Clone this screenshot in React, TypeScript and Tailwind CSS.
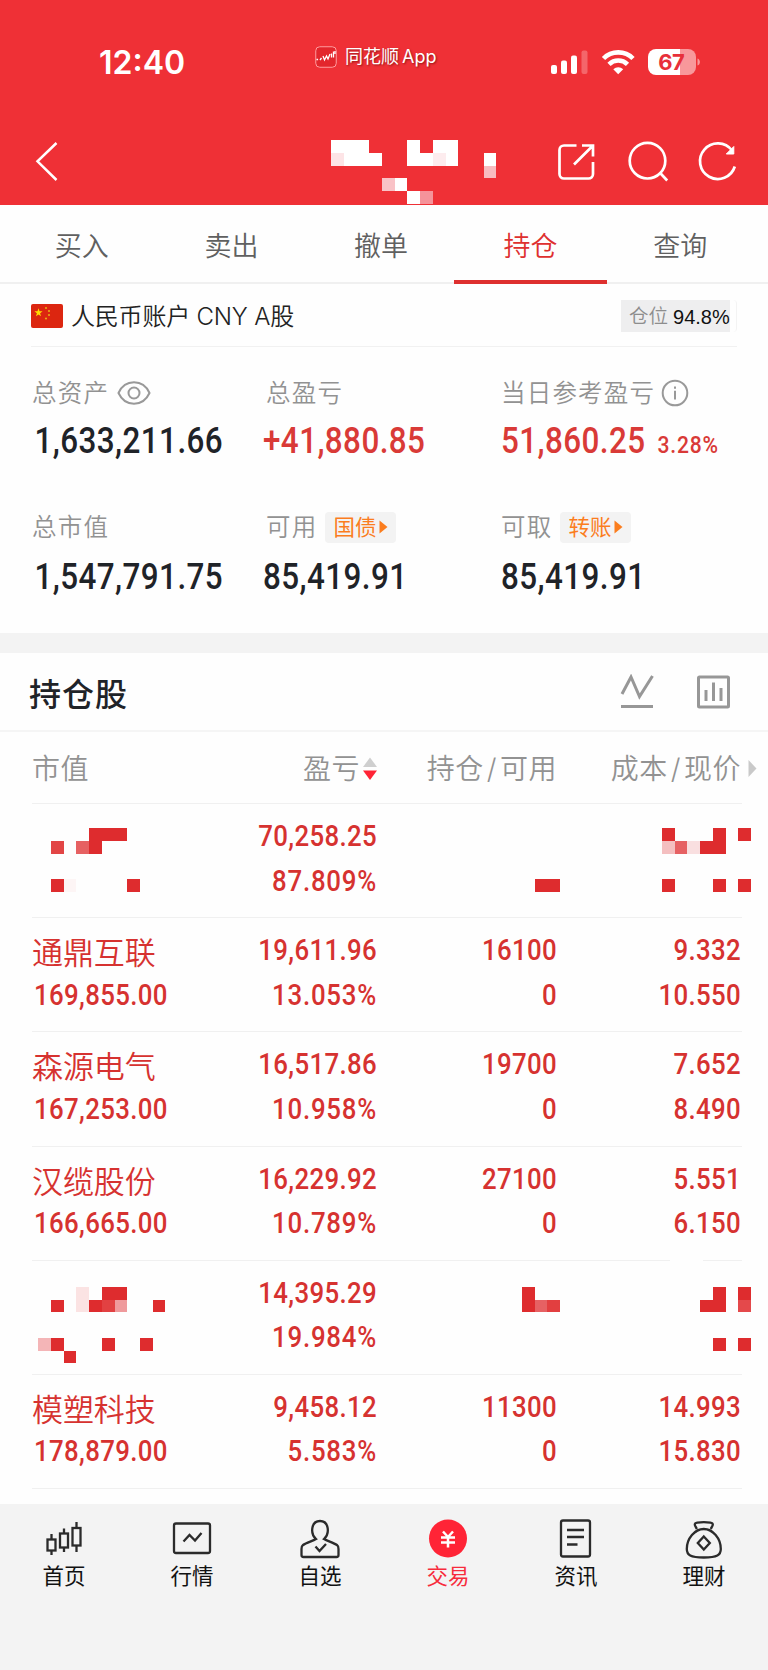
import type { ReactNode } from "react";
import clsx from "clsx";

type Cell = [x: number, y: number, w: number, fill?: string];

// The redaction blocks sit on one page-wide grid of near-square cells
const CELL_W = 12.73;
const CELL_H = 12.74;

function Mosaic({ cells, top, height }: { cells: Cell[]; top: number; height: number }) {
  return (
    <svg
      className="absolute left-0 top-0 w-[768px] pointer-events-none"
      height={height}
      viewBox={`0 ${top} 768 ${height}`}
      shapeRendering="crispEdges"
    >
      {cells.map(([x, y, w, fill = "#de2c2e"], i) => (
        <rect key={i} x={x * CELL_W} y={y * CELL_H} width={w * CELL_W} height={CELL_H} fill={fill} />
      ))}
    </svg>
  );
}

const titleCells: Cell[] = [
  [26, 11, 3, "#fff"],
  [26, 12, 1, "#fde4e6"],
  [27, 12, 3, "#fff"],
  [32, 11, 1, "#fff"],
  [34, 11, 2, "#fff"],
  [32, 12, 2, "#fff"],
  [34, 12, 1, "#fdecee"],
  [35, 12, 1, "#fff"],
  [38, 12, 1, "#fff"],
  [38, 13, 1, "#f8bcc0"],
  [30, 14, 1, "#f9c2c6"],
  [31, 14, 1, "#fff"],
  [32, 15, 1, "#fff"],
  [33, 15, 1, "#f5939a"],
];

type Holding = {
  name?: string;
  value?: string;
  profit: string;
  percent: string;
  amount?: string;
  usable?: string;
  cost?: string;
  price?: string;
  cells?: Cell[];
};

const holdings: Holding[] = [
  {
    profit: "70,258.25",
    percent: "87.809%",
    cells: [
      [7, 65, 3],
      [4, 66, 1, "#e24545"],
      [6, 66, 1, "#e66162"],
      [7, 66, 1],
      [4, 69, 1],
      [5, 69, 1, "#fdf5f5"],
      [10, 69, 1],
      [42, 69, 2],
      [52, 65, 1],
      [56, 65, 1],
      [58, 65, 1],
      [52, 66, 1, "#f4bfc0"],
      [53, 66, 1, "#e66163"],
      [54, 66, 1, "#f9dfe0"],
      [55, 66, 2],
      [52, 69, 1],
      [56, 69, 1],
      [58, 69, 1],
    ],
  },
  { name: "通鼎互联", value: "169,855.00", profit: "19,611.96", percent: "13.053%", amount: "16100", usable: "0", cost: "9.332", price: "10.550" },
  { name: "森源电气", value: "167,253.00", profit: "16,517.86", percent: "10.958%", amount: "19700", usable: "0", cost: "7.652", price: "8.490" },
  { name: "汉缆股份", value: "166,665.00", profit: "16,229.92", percent: "10.789%", amount: "27100", usable: "0", cost: "5.551", price: "6.150" },
  {
    profit: "14,395.29",
    percent: "19.984%",
    cells: [
      [52.6, 98.3, 2.6, "#fefefe"],
      [6, 101, 1, "#fbe3e3"],
      [8, 101, 2],
      [4, 102, 1],
      [6, 102, 1, "#fbe3e3"],
      [7, 102, 1],
      [8, 102, 1, "#e24142"],
      [9, 102, 1, "#ef9a9c"],
      [12, 102, 1],
      [3, 105, 1, "#f4b5b7"],
      [4, 105, 1],
      [8, 105, 1],
      [11, 105, 1],
      [5, 106, 1],
      [41, 101, 1],
      [41, 102, 1],
      [42, 102, 1, "#e66163"],
      [43, 102, 1, "#e23f40"],
      [56, 101, 1],
      [58, 101, 1],
      [55, 102, 2],
      [58, 102, 1, "#e4494b"],
      [56, 105, 1],
      [58, 105, 1],
    ],
  },
  { name: "模塑科技", value: "178,879.00", profit: "9,458.12", percent: "5.583%", amount: "11300", usable: "0", cost: "14.993", price: "15.830" },
];

// Figures are set in a slightly condensed cut
const num = "font-['Roboto'] font-medium whitespace-nowrap scale-x-[0.86]";

function StatusBar() {
  return (
    <div className="flex h-[104px] items-start text-white">
      <div className="ml-[99px] mt-[46px] w-[216px] text-[32px] leading-[33px] font-semibold">12:40</div>
      <div className="mt-[44px] flex w-[236px] items-center">
        <svg width="22" height="24" viewBox="0 0 22 24" fill="none">
          <rect x="0.75" y="1.75" width="20.5" height="20.5" rx="4" fill="#e3262c" stroke="#ff9c9f" strokeWidth="1" />
          <path d="M1.5 14.5h1.6M5 15l1.5-2M8 11l1.500 4 2-4 1.500 3 2-5M16.500 8.500v4M18.500 6.500v6M20 6v3" stroke="#fff" strokeWidth="1.3" />
        </svg>
        <span className="ml-[8px] pt-px text-[18px] leading-6 whitespace-nowrap [word-spacing:-2px] [text-shadow:1px_1px_2px_rgba(90,0,0,0.6)]">同花顺 App</span>
      </div>
      <svg className="mt-[48px]" width="152" height="28" viewBox="0 0 152 28">
        <rect x="0" y="17" width="6" height="9" rx="2" fill="#fff" />
        <rect x="10" y="12.500" width="6" height="13.500" rx="2" fill="#fff" />
        <rect x="20" y="7.500" width="6" height="18.500" rx="2" fill="#fff" />
        <rect x="30.500" y="2.500" width="6" height="23.500" rx="2" fill="#f4666a" />
        <g fill="none" stroke="#fff" strokeWidth="4.600">
          <path d="M52.500 10.500c8-8.200 21.500-8.200 29.500 0" />
          <path d="M58 16.300c5.200-5 13.300-5 18.500 0" />
        </g>
        <path d="M62.300 21.300c2.900-2.700 7-2.700 9.900 0l-5 5z" fill="#fff" />
        <path d="M105 1h24v26h-24a8 8 0 0 1-8-8v-10a8 8 0 0 1 8-8z" fill="#fff" />
        <path d="M129 1h8a8 8 0 0 1 8 8v10a8 8 0 0 1-8 8h-8z" fill="#f8989b" />
        <path d="M146.500 10.500c3.200 1 3.200 6 0 7z" fill="#f8989b" />
        <text x="120.200" y="22" textAnchor="middle" fontSize="22" fontWeight="700" fontFamily="Inter" letterSpacing="-0.5" fill="#e8303a">67</text>
      </svg>
    </div>
  );
}

function TitleBar() {
  return (
    <div className="flex h-[101px] items-start pt-[37px]">
      <svg className="ml-[35px]" width="24" height="40" viewBox="0 0 24 40" fill="none" stroke="#fff" strokeWidth="2.500">
        <path d="M21.500 2 2.500 20.300 21.500 39" />
      </svg>
      <svg className="ml-auto mr-[31px]" width="180" height="42" viewBox="556 141 180 42" fill="none" stroke="#fff" strokeWidth="2.700">
        <path d="M575.500 145.500h-12.500a4.500 4.500 0 0 0-4.500 4.500v24a4.500 4.500 0 0 0 4.500 4.500h24.500a4.500 4.500 0 0 0 4.500-4.500v-12M581 145.500h11v11M591.500 146l-18.500 18.500" />
        <circle cx="646.500" cy="160.700" r="17.800" />
        <path d="m658.700 172.500 7.500 8" />
        <path d="M733.800 166.500A17.800 17.800 0 1 1 731 150.500" />
        <path d="M732.800 146.500v7.500h-7.500z" fill="#fff" strokeWidth="1" />
      </svg>
    </div>
  );
}

const tabs = ["买入", "卖出", "撤单", "持仓", "查询"];

function Tabs() {
  return (
    <div className="flex h-[79px] border-b-2 border-[#f0f0f0] pl-[7px] pr-[13px]">
      {tabs.map((tab) => (
        <div
          key={tab}
          className={clsx(
            "relative flex flex-1 items-center justify-center pt-[8px] text-[27px] font-[350]",
            tab === "持仓" ? "text-[#de302f]" : "text-[#606060]"
          )}
        >
          {tab}
          {tab === "持仓" && <div className="absolute -bottom-[2px] -left-[2px] -right-[2px] h-[4px] bg-[#de302f]" />}
        </div>
      ))}
    </div>
  );
}

function Account() {
  return (
    <div className="ml-[31px] mr-[31px] flex h-[63px] items-center border-b border-[#f1f1f1] pt-[2px]">
      <svg width="32" height="24" viewBox="0 0 32 24">
        <rect width="32" height="24" rx="2" fill="#dc2610" />
        <path d="m7.500 4.200 1 3 3.100.1-2.500 1.900.9 3-2.500-1.800-2.500 1.800.9-3-2.500-1.900 3.100-.1z" fill="#ffde00" />
        <g fill="#e9a814">
          <circle cx="15" cy="4" r="1.100" />
          <circle cx="18" cy="7" r="1.100" />
          <circle cx="18" cy="11" r="1.100" />
          <circle cx="15" cy="14.500" r="1.100" />
        </g>
      </svg>
      <span className="ml-[8px] pt-px text-[24px] font-[350] text-[#222] tracking-[-0.2px] whitespace-nowrap">人民币账户 CNY A股</span>
      <div className="ml-auto flex h-[32px] w-[116px] items-center rounded-r-[4px] border-r border-[#f3f3f3] bg-[linear-gradient(to_right,#eeeeef_94.8%,#fefefe_94.8%)] pl-[8px] pt-px text-[19.500px] leading-none whitespace-nowrap">
        <span className="font-[350] text-[#8d8d8d]">仓位</span>
        <span className="ml-[5px] font-['Liberation_Sans'] text-[20px] text-[#111]">94.8%</span>
      </div>
    </div>
  );
}

function Pill({ children }: { children: ReactNode }) {
  return (
    <span className="ml-[8px] flex h-[31px] w-[71px] items-center rounded-[4px] bg-[#f3f3f3] pl-[8px] text-[21.500px] font-normal tracking-normal text-[#fb7d1e]">
      {children}
      <svg className="ml-[3px] shrink-0" width="9" height="14" viewBox="0 0 9 14">
        <path d="M0.500 0.500 8.500 7 0.500 13.500z" fill="#fb7d1e" />
      </svg>
    </span>
  );
}

function Stat({ label, extra, value, className, children }: { label: string; extra?: ReactNode; value: string; className?: string; children?: ReactNode }) {
  return (
    <div>
      <div className="flex h-[32px] items-center text-[24.500px] font-[350] tracking-[1.200px] text-[#929292] whitespace-nowrap">
        {label}
        {extra}
      </div>
      <div className={clsx(num, "mt-[13px] flex h-[38px] origin-left items-baseline text-[36.500px] leading-[38px] tracking-[0.500px]", className)}>
        {value}
        {children}
      </div>
    </div>
  );
}

function Summary() {
  return (
    <div className="grid h-[286px] grid-cols-[234px_235px_1fr] grid-rows-[134px_1fr] pl-[32px] pt-[30px]">
      <Stat
        label="总资产"
        value="1,633,211.66"
        className="pl-[3px] text-[#1f2328]"
        extra={
          <svg className="ml-[8px]" width="34" height="26" viewBox="0 0 34 26" fill="none" stroke="#999" strokeWidth="2">
            <path d="M1.500 13C8-1.200 26-1.200 32.500 13 26 27.200 8 27.200 1.500 13z" />
            <circle cx="17" cy="13" r="5.500" />
          </svg>
        }
      />
      <Stat label="总盈亏" value="+41,880.85" className="-ml-[3px] text-[#d93a37]" />
      <Stat
        label="当日参考盈亏"
        value="51,860.25"
        className="text-[#d93a37]"
        extra={
          <svg className="ml-[6px]" width="28" height="28" viewBox="0 0 28 28" fill="none" stroke="#999" strokeWidth="2">
            <circle cx="14" cy="14" r="12.300" />
            <path d="M14 11.800v8.700M14 7.500v2.200" />
          </svg>
        }
      >
        <span className="ml-[14px] text-[24.500px] tracking-[0.900px]">3.28%</span>
      </Stat>
      <Stat label="总市值" value="1,547,791.75" className="mt-[15px] pl-[3px] text-[#1f2328]" />
      <Stat label="可用" extra={<Pill>国债</Pill>} value="85,419.91" className="-ml-[3px] mt-[15px] text-[#1f2328]" />
      <Stat label="可取" extra={<Pill>转账</Pill>} value="85,419.91" className="mt-[15px] text-[#1f2328]" />
    </div>
  );
}

function HoldingsHeader() {
  return (
    <>
      <div className="flex h-[79px] items-center border-b-2 border-[#f5f5f5] pl-[29px] pr-[36px] pt-[6px]">
        <h2 className="text-[32px] font-medium text-[#1f2328] tracking-[1px]">持仓股</h2>
        <svg className="ml-auto -mt-[5px]" width="112" height="36" viewBox="620 674 112 36" fill="none" stroke="#979797" strokeWidth="3">
          <path d="m622 694 9-17 8.500 19.500L652.500 676M621 706.500h32" />
          <rect x="698.500" y="677" width="30" height="30" rx="1" />
          <path d="M706 690v11M713.500 682.500V701M721 688v13" />
        </svg>
      </div>
      <div className="ml-[32px] mr-[11px] grid h-[72px] grid-cols-[345px_180px_1fr] items-center pt-px text-[28px] font-[350] tracking-[0.500px] text-[#929292] whitespace-nowrap">
        <div className="flex items-center justify-between">
          <span>市值</span>
          <span className="flex items-center">
            盈亏
            <svg className="ml-[3px]" width="14" height="24" viewBox="0 0 14 24">
              <path d="M7 0.500 14 10H0z" fill="#cfcfcf" />
              <path d="M0 13.500h14L7 23z" fill="#ff2436" />
            </svg>
          </span>
        </div>
        <div className="text-right">
          持仓<span className="px-[3px]">/</span>可用
        </div>
        <div className="flex items-center justify-end">
          成本<span className="px-[3px]">/</span>现价
          <svg className="ml-[7px]" width="9" height="17" viewBox="0 0 9 17">
            <path d="M0.500 0 8.500 8.500 0.500 17z" fill="#c9c9c9" />
          </svg>
        </div>
      </div>
    </>
  );
}

function Pair({ top, bottom }: { top?: string; bottom?: string }) {
  return (
    <div className={clsx(num, "origin-right text-right")}>
      <div className="h-[44.500px]">{top}</div>
      <div className={clsx("h-[44.500px]", bottom?.endsWith("%") && "tracking-[0.900px]")}>{bottom}</div>
    </div>
  );
}

function HoldingRow({ item, top }: { item: Holding; top: number }) {
  return (
    <div className="relative h-[114.200px]">
      <div className="ml-[32px] mr-[26px] h-px bg-[#f0f0f0]" />
      <div className="ml-[34px] grid grid-cols-[180px_163px_180px_184px] pt-[10px] text-[30px] leading-[44.500px] tracking-[0.400px] text-[#d63230]">
        <div>
          <div className="-ml-[2px] h-[44.500px] pt-[3px] text-[31px] font-[350] tracking-[-0.100px]">{item.name}</div>
          <div className={clsx(num, "h-[44.500px] origin-left")}>{item.value}</div>
        </div>
        <Pair top={item.profit} bottom={item.percent} />
        <Pair top={item.amount} bottom={item.usable} />
        <Pair top={item.cost} bottom={item.price} />
      </div>
      {item.cells && <Mosaic cells={item.cells} top={top} height={114} />}
    </div>
  );
}

const navItems: { label: string; icon: ReactNode }[] = [
  {
    label: "首页",
    icon: (
      <g>
        <rect x="5.500" y="19.500" width="8" height="11" />
        <rect x="18" y="13.500" width="8" height="14" />
        <rect x="30.500" y="8" width="8" height="17.500" />
        <path d="M9.500 14v5.500M9.500 30.500V35M22 8.500v5M22 27.500V32M34.500 2v6M34.500 25.500V32" />
      </g>
    ),
  },
  {
    label: "行情",
    icon: (
      <g>
        <rect x="4" y="3.500" width="36" height="29.500" rx="2" />
        <path d="m13.500 21.500 6-6.500 5.500 5.500 6.500-7.500" />
      </g>
    ),
  },
  {
    label: "自选",
    icon: (
      <g>
        <path d="M18 19c-6-5.500-5-18 4-18s10 12.500 4 18c3.500 2 9.500 3.700 13 6 1.500 1 1.500 2.500 1.500 4V35a2 2 0 0 1-2 2H5.500a2 2 0 0 1-2-2v-6c0-1.500 0-3 1.500-4 3.500-2.300 9.500-4 13-6z" />
        <path d="m17.500 26.500 4 4.500 6.500-7" />
      </g>
    ),
  },
  {
    label: "交易",
    icon: (
      <g>
        <circle cx="22" cy="18.500" r="19" fill="#ff2436" stroke="none" />
        <path d="m17 11.500 5 5.500 5-5.500M22 17v10.500M15 17.500h14M15 22.500h14" stroke="#fff" strokeWidth="2.500" />
      </g>
    ),
  },
  {
    label: "资讯",
    icon: (
      <g>
        <rect x="7" y="0.500" width="29" height="36" rx="2" />
        <path d="M13 10h17M13 17h17M13 24.500h10.500" />
      </g>
    ),
  },
  {
    label: "理财",
    icon: (
      <g transform="translate(-0.7 0)">
        <path d="M15.500 9c-1-2.500-2-3-2-4.500 0-1 1-1.500 2.500-1.800 4-.7 9-.7 13 0 1.500.3 2.500.8 2.500 1.800 0 1.500-1 2-2 4.500" />
        <path d="M22.500 9c-9 0-17 9.500-17 20 0 6 3.500 8.500 17 8.500s17-2.500 17-8.500c0-10.500-8-20-17-20z" />
        <path d="m22.500 16.500 6 6.500-6 6.500-6-6.500z" />
      </g>
    ),
  },
];

function BottomNav() {
  return (
    <nav className="grid h-[166px] grid-cols-6 bg-[#f3f3f3] pt-[14px]">
      {navItems.map(({ label, icon }) => (
        <div key={label} className={clsx("flex flex-col items-center", label === "交易" ? "text-[#f72b3c]" : "text-[#111]")}>
          <svg width="44" height="42" viewBox="0 -2 44 42" fill="none" stroke="#2b2b2b" strokeWidth="2.300">
            {icon}
          </svg>
          <span className="mt-[1px] text-[21.500px] leading-[30px]">{label}</span>
        </div>
      ))}
    </nav>
  );
}

export default function App() {
  return (
    <div className="h-[1670px] w-[768px] overflow-hidden bg-[#fefefe] font-['Inter','Noto_Sans_CJK_SC',sans-serif]">
      <header className="relative h-[205px] bg-[#ef3036]">
        <StatusBar />
        <TitleBar />
        <Mosaic cells={titleCells} top={0} height={205} />
      </header>
      <Tabs />
      <Account />
      <Summary />
      <div className="h-[20px] bg-[#f3f3f3]" />
      <HoldingsHeader />
      <div className="h-[701px] -mt-px">
        {holdings.map((item, i) => (
          <HoldingRow key={i} item={item} top={803 + i * 114.2} />
        ))}
        <div className="ml-[32px] mr-[26px] h-px bg-[#f0f0f0]" />
      </div>
      <BottomNav />
    </div>
  );
}
